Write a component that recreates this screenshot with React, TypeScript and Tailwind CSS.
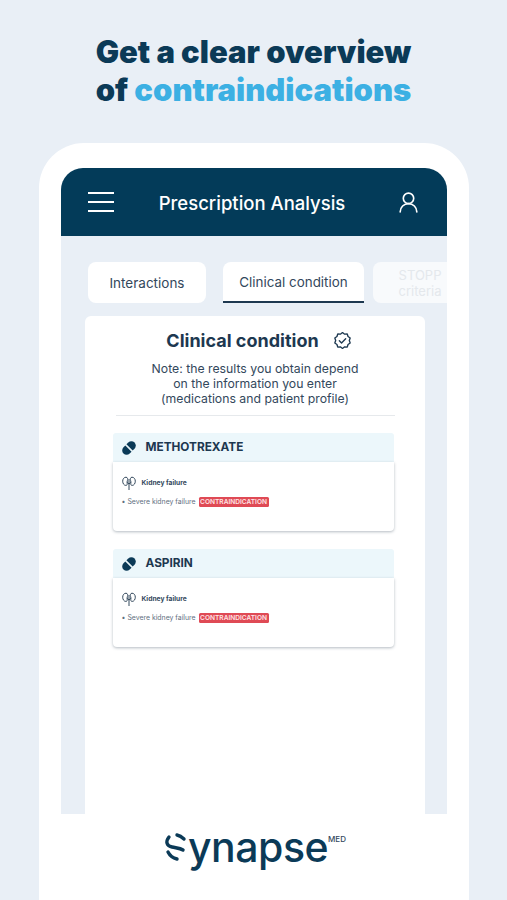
import { UserRound } from "lucide-react";

const font = { fontFamily: '"Inter", "Liberation Sans", sans-serif' };

function PillIcon() {
  return (
    <svg width="16" height="16" viewBox="0 0 16 16" className="shrink-0">
      <g transform="rotate(-45 8 8)">
        <path d="M7.2 3.6H4.6a4.4 4.4 0 0 0 0 8.8h2.6z" fill="#0b3a57" />
        <path d="M8.8 3.6h2.6a4.4 4.4 0 0 1 0 8.8H8.8z" fill="#0b3a57" />
      </g>
    </svg>
  );
}

function KidneyIcon() {
  return (
    <svg width="14" height="15" viewBox="0 0 14 15" fill="none" stroke="#33485c" strokeWidth="1" className="shrink-0">
      <path d="M4 1.200C2 1.200.7 3 .7 5.200S2 9.400 3.800 9.400c1.200 0 1.700-1 1.400-2C5 6.600 5 5.400 5.400 4.600 6 3.200 5.600 1.200 4 1.200z" />
      <path d="M10 1.200c2 0 3.300 1.800 3.300 4s-1.300 4.200-3.100 4.200c-1.200 0-1.700-1-1.400-2 .2-.8.200-2-.2-2.800-.6-1.400-.2-3.400 1.400-3.400z" />
      <path d="M5.200 6.400 7 8l1.800-1.600M7 3v11" />
    </svg>
  );
}

function DrugCard({ name }: { name: string }) {
  return (
    <div className="w-[281px]">
      <div className="flex h-[29px] items-center gap-[9px] rounded-t-[3px] bg-[#ecf7fb] pl-[8px] pt-[1px]">
        <PillIcon />
        <span className="text-[11.800px] font-bold text-[#1d3850]">{name}</span>
      </div>
      <div className="h-[69px] rounded-b-[4px] bg-white pl-[9px] pt-[14px] shadow-[0_1px_3px_rgba(40,60,80,0.35)]">
        <div className="flex items-center gap-[6px]">
          <KidneyIcon />
          <span className="text-[6.700px] font-bold text-[#33485c]">Kidney failure</span>
        </div>
        <div className="mt-[6px] flex items-center text-[6.900px] text-[#5f6f80]">
          <span className="mr-[2px]">•</span>
          <span>Severe kidney failure</span>
          <span className="ml-[3px] rounded-[1.500px] bg-[#df4a55] px-[1.500px] py-[0.500px] text-[6.600px] font-semibold leading-[9px] text-[#ffe6e6]">
            CONTRAINDICATION
          </span>
        </div>
      </div>
    </div>
  );
}

export default function App() {
  return (
    <div style={font} className="flex h-[900px] w-[507px] flex-col overflow-hidden bg-[#e9eff6]">
      <h1 className="mt-[33px] text-center text-[31px] font-black leading-[38px] text-[#0b3a57]">
        Get a clear overview
        <br />
        of <span className="text-[#3cb0e3]">contraindications</span>
      </h1>

      <div className="ml-[39px] mt-[34px] flex w-[430px] flex-1 flex-col rounded-t-[45px] bg-white px-[22px] pt-[25px]">
        <div className="flex h-[68px] w-[386px] items-center justify-between rounded-t-[22px] bg-[#033b59] pl-[27px] pr-[26px] text-white">
          <div className="flex w-[26px] flex-col gap-[7px]">
            <span className="h-[2px] bg-white" />
            <span className="h-[2px] bg-white" />
            <span className="h-[2px] bg-white" />
          </div>
          <span className="mr-[6px] mt-[4px] text-[18.500px] font-medium">Prescription Analysis</span>
          <UserRound size={25} strokeWidth={1.600} />
        </div>

        <div className="flex h-[578px] w-[386px] flex-col overflow-hidden bg-[#e9eff6]">
          <div className="ml-[27px] mt-[26px] flex items-start">
            <div className="flex h-[41px] w-[118px] shrink-0 items-center justify-center rounded-[8px] bg-white pt-[2px] text-[13.500px] text-[#33485c]">
              Interactions
            </div>
            <div className="ml-[17px] flex h-[41px] w-[141px] shrink-0 items-center justify-center rounded-t-[8px] border-b-2 border-[#1d3850] bg-white pt-[2px] text-[13.400px] text-[#33485c]">
              Clinical condition
            </div>
            <div className="ml-[9px] flex h-[41px] w-[94px] shrink-0 items-center justify-center rounded-[8px] bg-[#f8fafc] text-center text-[13px] leading-[16px] text-[#e4e8ec]">
              STOPP
              <br />
              criteria
            </div>
          </div>

          <div className="ml-[24px] mt-[13px] flex w-[340px] flex-1 flex-col items-center rounded-t-[6px] bg-white">
            <div className="ml-[8px] mt-[11px] flex items-center gap-[14px]">
              <span className="text-[18px] font-bold text-[#1d3850]">Clinical condition</span>
              <svg width="19" height="19" viewBox="0 0 24 24" fill="none" stroke="#1d3850" strokeWidth="1.700" strokeLinecap="round" strokeLinejoin="round">
                <path d="M12 2l2.700 2 3.300-.3 1 3.200 2.700 1.900-1.100 3.200 1.100 3.200-2.700 1.900-1 3.200-3.300-.3-2.700 2-2.700-2-3.300.3-1-3.200-2.700-1.900L3.400 12 2.300 8.800 5 6.900l1-3.200 3.300.3z" />
                <path d="M8 12.300l2.800 2.800 5.200-5.400" />
              </svg>
            </div>
            <p className="mt-[7px] text-center text-[12.250px] leading-[15px] text-[#33485c]">
              Note: the results you obtain depend
              <br />
              on the information you enter
              <br />
              (medications and patient profile)
            </p>
            <div className="mt-[9px] h-px w-[279px] bg-[#e6e9ec]" />
            <div className="mr-[4px] mt-[17px] flex flex-col gap-[18px]">
              <DrugCard name="METHOTREXATE" />
              <DrugCard name="ASPIRIN" />
            </div>
          </div>
        </div>

        <div className="flex flex-1 items-start justify-center pt-[16px]">
          <div className="flex items-start">
            <svg width="28" height="34" viewBox="0 0 28 34" fill="none" stroke="#0b3a57" strokeWidth="3.400" strokeLinecap="round" className="mr-[-2px] mt-[2px]">
              <path d="M15 3c3 .5 5 2 7 4" />
              <path d="M7 5C3 10 5 14 10 15c4 1 8 1 11 3" />
              <path d="M6 20c2 4 5 6 9 7" />
            </svg>
            <span className="mt-[-6px] text-[41px] font-medium leading-[46px] tracking-[-0.5px] text-[#0b3a57]">ynapse</span>
            <span className="mt-[3px] text-[8px] font-medium text-[#33485c]">MED</span>
          </div>
        </div>
      </div>
    </div>
  );
}
